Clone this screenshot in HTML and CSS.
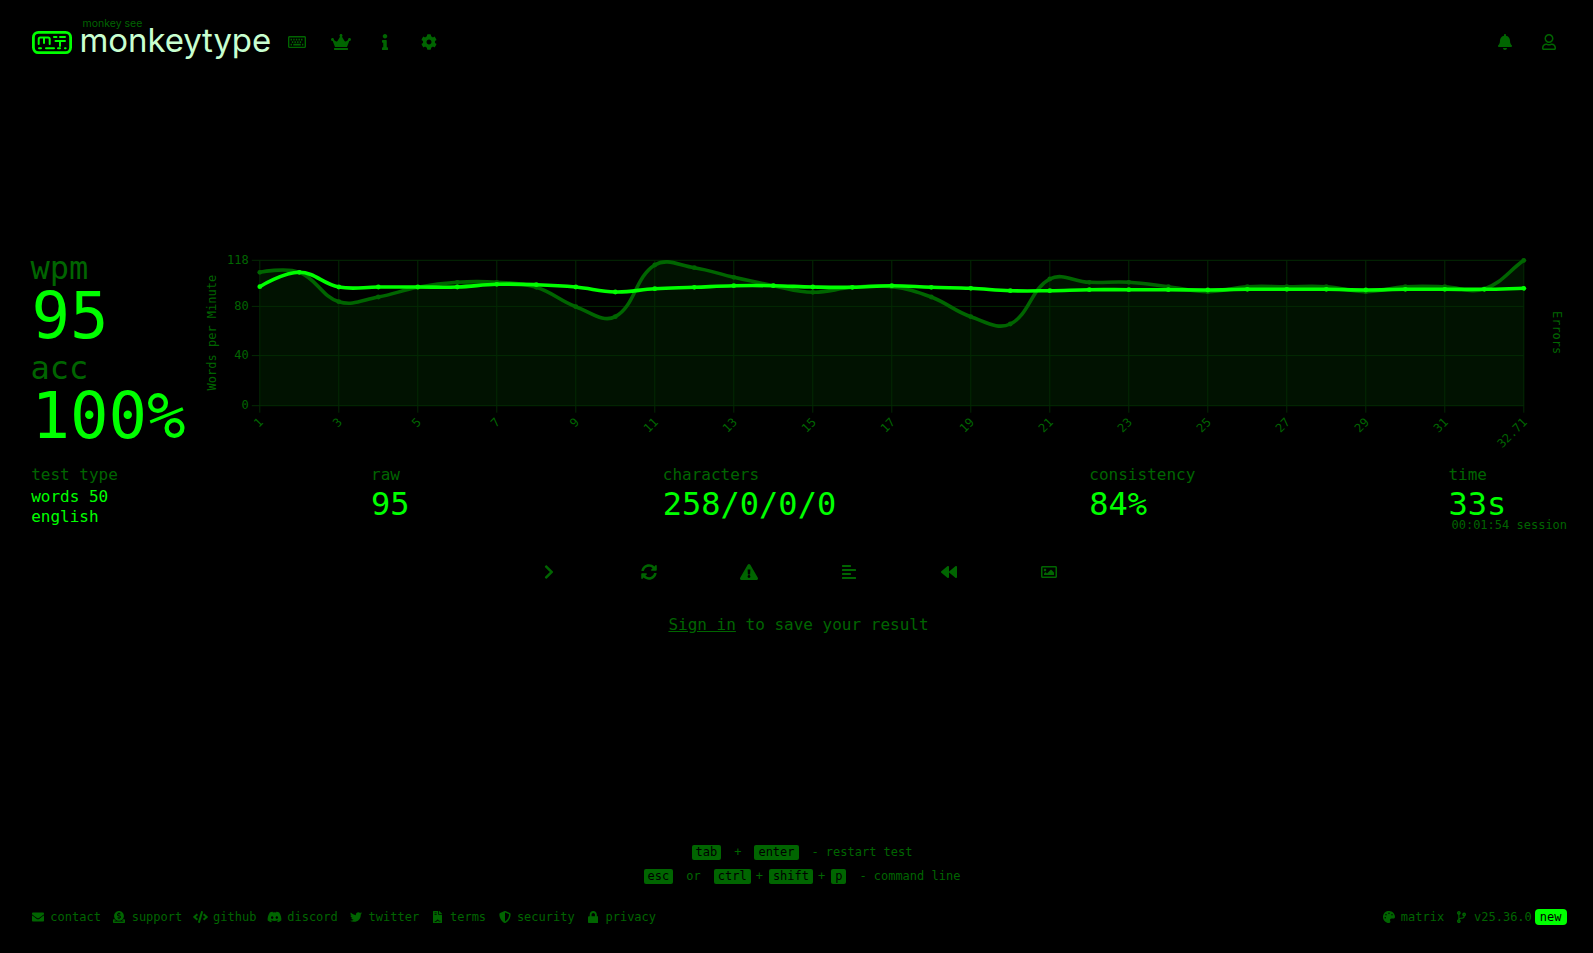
FILE: index.html
```html
<!DOCTYPE html>
<html lang="en">
<head>
  <meta charset="UTF-8">
  <meta name="viewport" content="width=device-width, initial-scale=1">
  <title>monkeytype</title>
  <link rel="stylesheet" href="styles.css">
</head>
<body>

<header class="top">
  <a class="logo">
    <svg class="logo-icon" viewBox="0 0 40 23" fill="none" stroke="currentColor" stroke-linecap="round" stroke-linejoin="round">
      <rect x="1.400" y="1.400" width="37.200" height="20.200" rx="5" stroke-width="2.800"/>
      <path stroke-width="2" d="M6.700 13V8.200a1.600 1.600 0 0 1 1.600-1.600h7.800a1.600 1.600 0 0 1 1.600 1.600V13M12 7v5M22 6h2.500M28 6h5M23.500 10H33M28 10v5M7 17.300h2M14 17.300h8M26 17.300h2M33 17.300h.6"/>
    </svg>
    <div class="logo-text">
      <div class="logo-top">monkey see</div>
      <div class="logo-name">monkeytype</div>
    </div>
  </a>
  <nav class="nav">
    <a class="nav-btn"><svg class="icon" viewBox="0 0 576 512"><path fill-rule="evenodd" d="M528 64H48C21.500 64 0 85.500 0 112v288c0 26.500 21.500 48 48 48h480c26.500 0 48-21.500 48-48V112c0-26.500-21.500-48-48-48zm4 340H44V108h488v296zM84 204h44v-52H84v52zm84 0h44v-52h-44v52zm84 0h44v-52h-44v52zm84 0h44v-52h-44v52zm80 0h48v-52h-48v52zM124 284h44v-52h-44v52zm84 0h44v-52h-44v52zm84 0h44v-52h-44v52zm84 0h44v-52h-44v52zM84 364h44v-52H84v52zm84 0h240v-52H168v52zm280 0h44v-52h-44v52z"/></svg></a>
    <a class="nav-btn"><svg class="icon" viewBox="0 0 640 512"><path d="M528 448H112c-8.800 0-16 7.200-16 16v32c0 8.800 7.200 16 16 16h416c8.800 0 16-7.200 16-16v-32c0-8.800-7.200-16-16-16zm64-320c-26.500 0-48 21.500-48 48 0 7.100 1.600 13.700 4.400 19.800L476 239.200c-15.400 9.200-35.300 4-44.200-11.600L350.300 85C361 76.200 368 63 368 48c0-26.500-21.500-48-48-48s-48 21.500-48 48c0 15 7 28.200 17.700 37l-81.500 142.600c-8.900 15.600-28.900 20.800-44.200 11.600l-72.300-43.400c2.700-6 4.400-12.700 4.400-19.800 0-26.500-21.500-48-48-48S0 149.500 0 176s21.500 48 48 48c2.600 0 5.200-.4 7.700-.8L128 416h384l72.300-192.800c2.500.4 5.100.8 7.700.8 26.500 0 48-21.500 48-48s-21.500-48-48-48z"/></svg></a>
    <a class="nav-btn"><svg class="icon" viewBox="0 0 192 512"><path d="M20 424.229h20V279.771H20c-11.046 0-20-8.954-20-20V212c0-11.046 8.954-20 20-20h112c11.046 0 20 8.954 20 20v212.229h20c11.046 0 20 8.954 20 20V492c0 11.046-8.954 20-20 20H20c-11.046 0-20-8.954-20-20v-47.771c0-11.046 8.954-20 20-20zM96 0C56.235 0 24 32.235 24 72s32.235 72 72 72 72-32.235 72-72S135.764 0 96 0z"/></svg></a>
    <a class="nav-btn"><svg class="icon" viewBox="0 0 512 512"><path d="M487.400 315.700l-42.600-24.600c4.300-23.200 4.300-47 0-70.200l42.600-24.600c4.900-2.800 7.100-8.600 5.500-14-11.100-35.600-30-67.800-54.700-94.600-3.800-4.100-10-5.100-14.800-2.300L380.800 110c-17.900-15.400-38.500-27.300-60.800-35.100V25.800c0-5.600-3.900-10.500-9.400-11.700-36.700-8.200-74.300-7.800-109.200 0-5.500 1.200-9.400 6.100-9.400 11.700V75c-22.200 7.900-42.800 19.800-60.800 35.100L88.700 85.500c-4.900-2.800-11-1.900-14.800 2.300-24.700 26.700-43.600 58.900-54.700 94.600-1.700 5.400.6 11.200 5.500 14L67.300 221c-4.300 23.200-4.300 47 0 70.200l-42.600 24.600c-4.900 2.800-7.100 8.600-5.500 14 11.100 35.600 30 67.800 54.700 94.600 3.800 4.100 10 5.100 14.800 2.300l42.600-24.600c17.900 15.400 38.500 27.300 60.800 35.100v49.200c0 5.600 3.900 10.500 9.400 11.700 36.700 8.200 74.300 7.800 109.200 0 5.500-1.200 9.400-6.100 9.400-11.700v-49.200c22.200-7.900 42.800-19.800 60.800-35.100l42.600 24.600c4.900 2.800 11 1.900 14.800-2.300 24.700-26.700 43.600-58.900 54.700-94.600 1.500-5.500-.7-11.300-5.600-14.100zM256 336c-44.100 0-80-35.900-80-80s35.900-80 80-80 80 35.900 80 80-35.900 80-80 80z"/></svg></a>
  </nav>
  <nav class="nav nav-right">
    <a class="nav-btn"><svg class="icon" viewBox="0 0 448 512"><path d="M224 512c35.320 0 63.970-28.650 63.970-64H160.030c0 35.350 28.650 64 63.970 64zm215.390-149.710c-19.320-20.760-55.470-51.990-55.470-154.290 0-77.700-54.480-139.900-127.940-155.160V32c0-17.670-14.320-32-31.980-32s-31.980 14.330-31.980 32v20.840C118.560 68.100 64.080 130.300 64.080 208c0 102.300-36.150 133.530-55.470 154.290-6 6.450-8.660 14.160-8.610 21.710.11 16.400 12.980 32 32.100 32h383.800c19.120 0 32-15.600 32.100-32 .05-7.550-2.610-15.270-8.610-21.710z"/></svg></a>
    <a class="nav-btn"><svg class="icon" viewBox="0 0 448 512"><path d="M313.600 304c-28.700 0-42.500 16-89.600 16-47.100 0-60.800-16-89.600-16C60.200 304 0 364.200 0 438.400V464c0 26.500 21.500 48 48 48h352c26.500 0 48-21.500 48-48v-25.600c0-74.200-60.200-134.400-134.400-134.400zM400 464H48v-25.600c0-47.600 38.800-86.400 86.400-86.400 14.600 0 38.300 16 89.600 16 51.700 0 74.900-16 89.600-16 47.600 0 86.400 38.800 86.400 86.400V464zM224 288c79.500 0 144-64.500 144-144S303.500 0 224 0 80 64.500 80 144s64.500 144 144 144zm0-240c52.900 0 96 43.100 96 96s-43.100 96-96 96-96-43.100-96-96 43.100-96 96-96z"/></svg></a>
  </nav>
</header>

<main class="result">
  <div class="result-top">
    <div class="big-stats">
      <div class="big-stat">
        <div class="big-label">wpm</div>
        <div class="big-value">95</div>
      </div>
      <div class="big-stat">
        <div class="big-label">acc</div>
        <div class="big-value">100%</div>
      </div>
    </div>
    <svg id="chart" class="chart" viewBox="200.500 252 1366 196"></svg>
  </div>

  <div class="more-stats">
    <div class="stat">
      <div class="stat-label">test type</div>
      <div class="stat-small">words 50<br>english</div>
    </div>
    <div class="stat">
      <div class="stat-label">raw</div>
      <div class="stat-value">95</div>
    </div>
    <div class="stat">
      <div class="stat-label">characters</div>
      <div class="stat-value">258/0/0/0</div>
    </div>
    <div class="stat">
      <div class="stat-label">consistency</div>
      <div class="stat-value">84%</div>
    </div>
    <div class="stat stat-time">
      <div class="stat-label">time</div>
      <div class="stat-value">33s</div>
      <div class="stat-session">00:01:54 session</div>
    </div>
  </div>

  <div class="actions">
    <a class="action"><svg class="icon" viewBox="0 0 320 512"><path d="M285.476 272.971L91.132 467.314c-9.373 9.373-24.569 9.373-33.941 0l-22.667-22.667c-9.357-9.357-9.375-24.522-.04-33.901L188.505 256 34.484 101.255c-9.335-9.379-9.317-24.544.04-33.901l22.667-22.667c9.373-9.373 24.569-9.373 33.941 0L285.475 239.030c9.373 9.372 9.373 24.568.001 33.941z"/></svg></a>
    <a class="action"><svg class="icon" viewBox="0 0 512 512"><path d="M370.720 133.280C339.458 104.008 298.888 87.962 255.848 88c-77.458.068-144.328 53.178-162.791 126.850-1.344 5.363-6.122 9.150-11.651 9.150H24.103c-7.498 0-13.194-6.807-11.807-14.176C33.933 94.924 134.813 8 256 8c66.448 0 126.791 26.136 171.315 68.685L463.030 40.970C478.149 25.851 504 36.559 504 57.941V192c0 13.255-10.745 24-24 24H345.941c-21.382 0-32.090-25.851-16.971-40.971l41.750-41.749zM32 296h134.059c21.382 0 32.090 25.851 16.971 40.971l-41.750 41.750c31.262 29.273 71.835 45.319 114.876 45.280 77.418-.07 144.315-53.144 162.787-126.849 1.344-5.363 6.122-9.150 11.651-9.150h57.304c7.498 0 13.194 6.807 11.807 14.176C478.067 417.076 377.187 504 256 504c-66.448 0-126.791-26.136-171.315-68.685L48.970 471.030C33.851 486.149 8 475.441 8 454.059V320c0-13.255 10.745-24 24-24z"/></svg></a>
    <a class="action"><svg class="icon" viewBox="0 0 576 512"><path d="M569.517 440.013C587.975 472.007 564.806 512 527.940 512H48.054c-36.937 0-59.999-40.055-41.577-71.987L246.423 23.985c18.467-32.009 64.720-31.951 83.154 0l239.940 416.028zM288 354c-25.405 0-46 20.595-46 46s20.595 46 46 46 46-20.595 46-46-20.595-46-46-46zm-43.673-165.346l7.418 136c.347 6.364 5.609 11.346 11.982 11.346h48.546c6.373 0 11.635-4.982 11.982-11.346l7.418-136c.375-6.874-5.098-12.654-11.982-12.654h-63.383c-6.884 0-12.356 5.780-11.981 12.654z"/></svg></a>
    <a class="action"><svg class="icon" viewBox="0 0 448 512"><path d="M12.830 352h262.340A12.820 12.820 0 0 0 288 339.170v-38.340A12.820 12.820 0 0 0 275.170 288H12.830A12.820 12.820 0 0 0 0 300.830v38.340A12.820 12.820 0 0 0 12.830 352zm0-256h262.340A12.820 12.820 0 0 0 288 83.170V44.830A12.820 12.820 0 0 0 275.170 32H12.830A12.820 12.820 0 0 0 0 44.830v38.340A12.820 12.820 0 0 0 12.830 96zM432 160H16a16 16 0 0 0-16 16v32a16 16 0 0 0 16 16h416a16 16 0 0 0 16-16v-32a16 16 0 0 0-16-16zm0 256H16a16 16 0 0 0-16 16v32a16 16 0 0 0 16 16h416a16 16 0 0 0 16-16v-32a16 16 0 0 0-16-16z"/></svg></a>
    <a class="action"><svg class="icon" viewBox="0 0 512 512"><path d="M11.500 280.600l192 160c20.600 17.200 52.500 2.800 52.500-24.600V96c0-27.400-31.900-41.800-52.500-24.600l-192 160c-15.300 12.800-15.300 36.400 0 49.200zm256 0l192 160c20.600 17.200 52.500 2.800 52.500-24.600V96c0-27.400-31.900-41.800-52.500-24.600l-192 160c-15.300 12.800-15.300 36.400 0 49.200z"/></svg></a>
    <a class="action"><svg class="icon" viewBox="0 0 512 512"><path d="M464 64H48C21.490 64 0 85.490 0 112v288c0 26.510 21.490 48 48 48h416c26.510 0 48-21.490 48-48V112c0-26.510-21.490-48-48-48zm-6 336H54a6 6 0 0 1-6-6V118a6 6 0 0 1 6-6h404a6 6 0 0 1 6 6v276a6 6 0 0 1-6 6zM128 152c-22.091 0-40 17.909-40 40s17.909 40 40 40 40-17.909 40-40-17.909-40-40-40zM96 352h320v-80l-87.515-87.515c-4.686-4.686-12.284-4.686-16.971 0L192 304l-39.515-39.515c-4.686-4.686-12.284-4.686-16.971 0L96 304v48z"/></svg></a>
  </div>

  <div class="sign-in"><a href="#">Sign in</a> to save your result</div>
</main>

<div class="hints">
  <div><kbd>tab</kbd><span class="sep">+</span><kbd>enter</kbd><span class="sep sep-end">-</span>restart test</div>
  <div><kbd>esc</kbd><span class="sep">or</span><kbd>ctrl</kbd><span class="plus">+</span><kbd>shift</kbd><span class="plus">+</span><kbd>p</kbd><span class="sep sep-end">-</span>command line</div>
</div>

<footer class="bottom">
  <div class="links">
    <a class="link"><span class="fw"><svg class="icon" viewBox="0 0 512 512"><path d="M502.300 190.800c3.900-3.100 9.700-.2 9.700 4.700V400c0 26.500-21.500 48-48 48H48c-26.500 0-48-21.500-48-48V195.600c0-5 5.700-7.800 9.700-4.700 22.400 17.400 52.100 39.500 154.100 113.600 21.100 15.400 56.700 47.800 92.200 47.600 35.700.3 72-32.800 92.300-47.600 102-74.100 131.600-96.300 154-113.700zM256 320c23.200.4 56.600-29.200 73.400-41.400 132.700-96.300 142.800-104.700 173.400-128.700 5.800-4.500 9.200-11.500 9.200-18.900v-19c0-26.500-21.500-48-48-48H48C21.500 64 0 85.500 0 112v19c0 7.400 3.400 14.300 9.200 18.900 30.600 23.900 40.700 32.400 173.400 128.700 16.800 12.200 50.200 41.800 73.400 41.400z"/></svg></span>contact</a>
    <a class="link"><span class="fw"><svg class="icon" viewBox="0 0 512 512"><path d="M256 416c114.900 0 208-93.100 208-208S370.900 0 256 0 48 93.100 48 208s93.100 208 208 208zM233.800 97.400V80.600c0-9.200 7.400-16.600 16.600-16.600h11.100c9.200 0 16.600 7.400 16.600 16.600v17c15.500.8 30.500 6.100 43 15.400 5.600 4.100 6.200 12.300 1.200 17.100L306 145.600c-3.800 3.700-9.500 3.800-14 1-5.400-3.400-11.400-5.100-17.800-5.100h-38.900c-9 0-16.300 8.200-16.300 18.300 0 8.200 5 15.500 12.100 17.600l62.300 18.700c25.700 7.700 43.700 32.400 43.700 60.100 0 34-26.400 61.500-59.100 62.400v16.800c0 9.200-7.400 16.600-16.600 16.600h-11.100c-9.200 0-16.600-7.400-16.600-16.600v-17c-15.500-.8-30.500-6.100-43-15.400-5.600-4.100-6.200-12.300-1.200-17.100l16.300-15.500c3.800-3.700 9.500-3.800 14-1 5.400 3.400 11.400 5.100 17.800 5.100h38.900c9 0 16.300-8.200 16.300-18.300 0-8.200-5-15.500-12.100-17.600l-62.300-18.700c-25.700-7.700-43.700-32.400-43.700-60.100.1-34 26.400-61.500 59.100-62.400zM480 352h-32.500c-19.600 26-44.600 47.700-73 64h63.800c5.300 0 9.600 3.600 9.600 8v16c0 4.400-4.300 8-9.600 8H73.600c-5.300 0-9.600-3.600-9.600-8v-16c0-4.400 4.300-8 9.600-8h63.800c-28.400-16.300-53.300-38-73-64H32c-17.700 0-32 14.300-32 32v96c0 17.700 14.300 32 32 32h448c17.700 0 32-14.300 32-32v-96c0-17.700-14.300-32-32-32z"/></svg></span>support</a>
    <a class="link"><span class="fw"><svg class="icon" viewBox="0 0 640 512"><path d="M278.900 511.500l-61-17.700c-6.400-1.800-10-8.500-8.200-14.900L346.200 8.700c1.800-6.400 8.500-10 14.900-8.200l61 17.700c6.400 1.800 10 8.500 8.200 14.900L293.800 503.300c-1.900 6.400-8.500 10.100-14.900 8.200zm-114-112.200l43.500-46.400c4.600-4.900 4.300-12.700-.8-17.200L117 256l90.600-79.700c5.100-4.500 5.500-12.300.8-17.200l-43.500-46.400c-4.500-4.800-12.100-5.100-17-.5L3.800 247.200c-5.100 4.700-5.100 12.800 0 17.500l144.100 135.100c4.900 4.600 12.500 4.400 17-.5zm327.200.6l144.100-135.100c5.100-4.700 5.100-12.800 0-17.500L492.100 112.100c-4.800-4.500-12.400-4.300-17 .5L431.600 159c-4.600 4.900-4.300 12.700.8 17.200L523 256l-90.600 79.700c-5.100 4.500-5.500 12.300-.8 17.200l43.500 46.400c4.500 4.900 12.100 5.100 17 .6z"/></svg></span>github</a>
    <a class="link"><span class="fw"><svg class="icon" viewBox="0 0 640 512"><path d="M524.531 69.836a1.500 1.500 0 0 0-.764-.7A485.065 485.065 0 0 0 404.081 32.030a1.816 1.816 0 0 0-1.923.91 337.461 337.461 0 0 0-14.900 30.600 447.848 447.848 0 0 0-134.426 0 309.541 309.541 0 0 0-15.135-30.600 1.890 1.890 0 0 0-1.924-.91A483.689 483.689 0 0 0 116.085 69.137a1.712 1.712 0 0 0-.788.676C39.068 183.651 18.186 294.690 28.430 404.354a2.016 2.016 0 0 0 .765 1.375A487.666 487.666 0 0 0 176.020 479.918a1.900 1.900 0 0 0 2.063-.676A348.200 348.200 0 0 0 208.120 430.400a1.860 1.860 0 0 0-1.019-2.588 321.173 321.173 0 0 1-45.868-21.853 1.885 1.885 0 0 1-.185-3.126c3.082-2.309 6.166-4.711 9.109-7.137a1.819 1.819 0 0 1 1.900-.256c96.229 43.917 200.410 43.917 295.500 0a1.812 1.812 0 0 1 1.924.233c2.944 2.426 6.027 4.851 9.132 7.160a1.884 1.884 0 0 1-.162 3.126 301.407 301.407 0 0 1-45.890 21.830 1.875 1.875 0 0 0-1 2.611 391.055 391.055 0 0 0 30.014 48.815 1.864 1.864 0 0 0 2.063.7A486.048 486.048 0 0 0 610.700 405.729a1.882 1.882 0 0 0 .765-1.352C623.729 277.594 590.933 167.465 524.531 69.836zM222.491 337.580c-28.972 0-52.844-26.587-52.844-59.239S193.056 219.100 222.491 219.100c29.665 0 53.306 26.820 52.843 59.239C275.334 310.993 251.924 337.580 222.491 337.580zm195.380 0c-28.971 0-52.843-26.587-52.843-59.239S388.437 219.100 417.871 219.100c29.667 0 53.307 26.820 52.844 59.239C470.715 310.993 447.538 337.580 417.871 337.580z"/></svg></span>discord</a>
    <a class="link"><span class="fw"><svg class="icon" viewBox="0 0 512 512"><path d="M459.370 151.716c.325 4.548.325 9.097.325 13.645 0 138.720-105.583 298.558-298.558 298.558-59.452 0-114.680-17.219-161.137-47.106 8.447.974 16.568 1.299 25.340 1.299 49.055 0 94.213-16.568 130.274-44.832-46.132-.975-84.792-31.188-98.112-72.772 6.498.974 12.995 1.624 19.818 1.624 9.421 0 18.843-1.300 27.614-3.573-48.081-9.747-84.143-51.980-84.143-102.985v-1.299c13.969 7.797 30.214 12.670 47.431 13.319-28.264-18.843-46.781-51.005-46.781-87.391 0-19.492 5.197-37.360 14.294-52.954 51.655 63.675 129.300 105.258 216.365 109.807-1.624-7.797-2.599-15.918-2.599-24.040 0-57.828 46.782-104.934 104.934-104.934 30.213 0 57.502 12.670 76.670 33.137 23.715-4.548 46.456-13.320 66.599-25.340-7.798 24.366-24.366 44.833-46.132 57.827 21.117-2.273 41.584-8.122 60.426-16.243-14.292 20.791-32.161 39.308-52.628 54.253z"/></svg></span>twitter</a>
    <a class="link"><span class="fw"><svg class="icon" viewBox="0 0 384 512"><path fill-rule="evenodd" d="M224 136V0H24C10.700 0 0 10.700 0 24v464c0 13.300 10.700 24 24 24h336c13.300 0 24-10.700 24-24V160H248c-13.200 0-24-10.800-24-24zM64 72c0-4.420 3.580-8 8-8h80c4.420 0 8 3.580 8 8v16c0 4.420-3.580 8-8 8H72c-4.420 0-8-3.580-8-8V72zm0 64c0-4.420 3.580-8 8-8h80c4.420 0 8 3.580 8 8v16c0 4.420-3.580 8-8 8H72c-4.420 0-8-3.580-8-8v-16zm192 280h64v32h-64c-30 0-40-30-60-30l-36 30-30 12H72v-32h48l60-60c20-10 40 0 50 20 8 16 16 28 26 28zM377 105L279.100 7c-4.500-4.500-10.600-7-17-7H256v128h128v-6.100c0-6.300-2.500-12.400-7-16.900z"/></svg></span>terms</a>
    <a class="link"><span class="fw"><svg class="icon" viewBox="0 0 512 512"><path d="M466.500 83.700l-192-80a48.150 48.150 0 0 0-36.900 0l-192 80C27.700 91.100 16 108.600 16 128c0 198.500 114.500 335.700 221.500 380.300 11.800 4.900 25.100 4.900 36.900 0C360.100 472.600 496 349.300 496 128c0-19.400-11.700-36.900-29.500-44.300zM256.100 446.300l-.1-381 175.900 73.300c-3.300 151.400-82.100 261.100-175.800 307.700z"/></svg></span>security</a>
    <a class="link"><span class="fw"><svg class="icon" viewBox="0 0 448 512"><path d="M400 224h-24v-72C376 68.200 307.800 0 224 0S72 68.200 72 152v72H48c-26.500 0-48 21.500-48 48v192c0 26.500 21.500 48 48 48h352c26.500 0 48-21.500 48-48V272c0-26.500-21.500-48-48-48zm-104 0H152v-72c0-39.700 32.300-72 72-72s72 32.300 72 72v72z"/></svg></span>privacy</a>
  </div>
  <div class="links links-right">
    <a class="link"><span class="fw"><svg class="icon" viewBox="0 0 512 512"><path d="M204.300 5C104.900 24.400 24.800 104.300 5.200 203.400c-37 187 131.700 326.400 258.800 306.700 41.200-6.400 61.400-54.600 42.500-91.700-23.100-45.400 9.900-98.400 60.900-98.400h79.700c35.800 0 64.800-29.600 64.900-65.300C511.500 97.100 368.100-26.900 204.300 5zM96 320c-17.700 0-32-14.300-32-32s14.300-32 32-32 32 14.300 32 32-14.300 32-32 32zm32-128c-17.700 0-32-14.300-32-32s14.300-32 32-32 32 14.300 32 32-14.300 32-32 32zm128-64c-17.700 0-32-14.300-32-32s14.300-32 32-32 32 14.300 32 32-14.300 32-32 32zm128 64c-17.700 0-32-14.300-32-32s14.300-32 32-32 32 14.300 32 32-14.300 32-32 32z"/></svg></span>matrix</a>
    <a class="link"><span class="fw"><svg class="icon" viewBox="0 0 384 512"><path d="M384 144c0-44.200-35.800-80-80-80s-80 35.800-80 80c0 36.400 24.300 67.100 57.500 76.800-.6 16.100-4.200 28.500-11 36.900-15.400 19.200-49.300 22.400-85.200 25.700-28.200 2.600-57.400 5.400-81.300 16.900v-144c32.500-10.200 56-40.500 56-76.300 0-44.200-35.800-80-80-80S0 35.800 0 80c0 35.800 23.500 66.100 56 76.300v199.300C23.500 365.900 0 396.200 0 432c0 44.200 35.800 80 80 80s80-35.800 80-80c0-34-21.200-63.100-51.200-74.600 3.100-5.200 7.800-9.800 14.900-13.400 16.200-8.200 40.400-10.400 66.100-12.800 42.200-3.900 90-8.400 118.200-43.400 14-17.400 21.100-39.800 21.600-67.900 31.600-10.800 54.400-40.700 54.400-75.900zM80 64c8.800 0 16 7.200 16 16s-7.200 16-16 16-16-7.200-16-16 7.200-16 16-16zm0 384c-8.800 0-16-7.200-16-16s7.200-16 16-16 16 7.200 16 16-7.200 16-16 16zm224-320c8.800 0 16 7.200 16 16s-7.200 16-16 16-16-7.200-16-16 7.200-16 16-16z"/></svg></span>v25.36.0<span class="badge">new</span></a>
  </div>
</footer>

<script src="chart.js"></script>
</body>
</html>
```

FILE: styles.css
```css
* {
  box-sizing: border-box;
}
html, body {
  margin: 0;
  height: 100%;
}
body {
  display: flex;
  flex-direction: column;
  height: 953px;
  padding: 0 26.5px 0 30.5px;
  background: #000;
  color: #006500;
  font-family: "DejaVu Sans Mono", "Liberation Mono", monospace;
  overflow: hidden;
}
a {
  color: inherit;
}
.icon {
  display: block;
  height: 1em;
  fill: currentColor;
}

/* Header */
.top {
  display: flex;
  align-items: center;
  height: 83px;
  flex: none;
}
.logo {
  display: flex;
  align-items: center;
  margin-right: 8px;
}
.logo-icon {
  width: 40px;
  height: 23px;
  color: #00ff00;
  margin: 1px 8px 0 1px;
}
.logo-text {
  margin-top: -6px;
  font-family: Inter, "Noto Sans", sans-serif;
}
.logo-top {
  font-size: 10.5px;
  line-height: 10px;
  margin-left: 3px;
  margin-bottom: -7px;
}
.logo-name {
  font-size: 33px;
  line-height: 36px;
  color: #c8ffd0;
  letter-spacing: -0.1px;
}
.nav {
  display: flex;
  gap: 8px;
}
.nav-right {
  margin-left: auto;
}
.nav-btn {
  display: flex;
  align-items: center;
  justify-content: center;
  width: 36px;
  height: 32px;
  font-size: 16px;
}

/* Result */
.result {
  padding-top: 169px;
}
.result-top {
  display: grid;
  grid-template-columns: 154px 1fr;
  gap: 16px;
  height: 196px;
}
.big-stats {
  display: flex;
  flex-direction: column;
  gap: 4px;
}
.big-label {
  font-size: 32px;
  line-height: 32px;
}
.big-value {
  font-size: 64px;
  line-height: 64px;
  margin-left: 1px;
  color: #00ff00;
}
.chart {
  display: block;
  width: 1366px;
  height: 196px;
  font-size: 12px;
  overflow: visible;
}
.chart text {
  fill: #006500;
  font-family: "DejaVu Sans Mono", "Liberation Mono", monospace;
}
.grid-line {
  stroke: #032a03;
  stroke-width: 1;
}
.area {
  fill: #011201;
}
.line {
  fill: none;
  stroke-width: 3.6;
}
.line-raw {
  stroke: #006500;
}
.line-wpm {
  stroke: #00ff00;
}
.more-stats {
  display: flex;
  justify-content: space-between;
  margin-top: 19px;
  padding-left: 0.7px;
}
.stat-label {
  font-size: 16px;
  line-height: 16px;
}
.stat-value {
  font-size: 32px;
  line-height: 32px;
  margin-top: 5px;
  color: #00ff00;
}
.stat-small {
  font-size: 16px;
  line-height: 20px;
  margin-top: 4px;
  color: #00ff00;
}
.stat-time {
  width: 118px;
}
.stat-session {
  font-size: 12px;
  line-height: 12px;
  margin: -1px 0 0 3px;
  white-space: nowrap;
}
.actions {
  display: flex;
  justify-content: center;
  margin-top: 25px;
}
.action {
  display: flex;
  align-items: center;
  justify-content: center;
  width: 100px;
  height: 32px;
  font-size: 16px;
}
.sign-in {
  margin-top: 29px;
  font-size: 16px;
  line-height: 16px;
  text-align: center;
}

/* Key hints */
.hints {
  margin-top: auto;
  margin-bottom: 21px;
  padding-left: 7px;
  font-size: 12px;
  line-height: 23.5px;
  text-align: center;
}
kbd {
  display: inline-block;
  height: 15px;
  padding: 0 4px;
  border-radius: 2px;
  background: #006500;
  color: #000;
  font: inherit;
  line-height: 15px;
}
.sep {
  margin: 0 13px;
}
.sep-end {
  margin-right: 7px;
}
.plus {
  margin: 0 6px 0 5px;
}

/* Footer */
.bottom {
  display: flex;
  justify-content: space-between;
  flex: none;
  height: 16px;
  margin-bottom: 28px;
  font-size: 12px;
  line-height: 16px;
}
.links {
  display: flex;
  gap: 11px;
}
.links-right {
  gap: 10px;
}
.link {
  display: flex;
  align-items: center;
}
.fw {
  display: flex;
  justify-content: center;
  width: 15px;
  margin-right: 4.8px;
}
.badge {
  margin-left: 3px;
  padding: 0 5px;
  border-radius: 4px;
  background: #00ff00;
  color: #000;
}
```

FILE: chart.js
```js
// px positions of the plot, same numbers as the svg viewBox
const plotLeft = 259.3;
const plotTop = 260.3;
const plotBottom = 405.7;
const step = 39.5;

const wpm = [286.7, 272.3, 287, 287, 287, 287, 284.3, 284.7, 287, 292, 288.7, 287.3, 285.7, 285.7, 287, 287.3, 285.7, 287.3, 288.3, 290.7, 290.7, 289.7, 289.7, 289.7, 290, 289.3, 289.3, 289.3, 290, 289.3, 289.3, 289.3, 288.3];
const raw = [272.3, 272.3, 301.7, 297, 287.3, 282.3, 282.3, 287.3, 306.7, 316.7, 265, 267.7, 277.3, 285.7, 292.3, 287.3, 286.7, 297, 316.7, 324, 279, 282.3, 282.3, 286.7, 291.7, 286.7, 286.7, 286.7, 291.7, 286.7, 286.7, 289, 260.3];

const svg = document.getElementById('chart');
const ns = 'http://www.w3.org/2000/svg';

function add(tag, attrs, text) {
  const el = document.createElementNS(ns, tag);
  Object.keys(attrs).forEach((k) => el.setAttribute(k, attrs[k]));
  if (text) el.textContent = text;
  svg.appendChild(el);
  return el;
}

function xAt(i) {
  return plotLeft + i * step;
}

// bezier spline, tension 0.4
function spline(ys) {
  const pts = ys.map((y, i) => ({ x: xAt(i), y }));
  const t = 0.4;
  let d = `M${pts[0].x} ${pts[0].y}`;
  let prevOut = pts[0];
  for (let i = 1; i < pts.length; i++) {
    const p = pts[i];
    const before = pts[i - 1];
    const after = pts[i + 1] || p;
    const d1 = Math.hypot(p.x - before.x, p.y - before.y);
    const d2 = Math.hypot(after.x - p.x, after.y - p.y);
    const fa = d1 + d2 ? t * d1 / (d1 + d2) : 0;
    const fb = d1 + d2 ? t * d2 / (d1 + d2) : 0;
    const inX = p.x - fa * (after.x - before.x);
    const inY = p.y - fa * (after.y - before.y);
    d += `C${prevOut.x} ${prevOut.y} ${inX} ${inY} ${p.x} ${p.y}`;
    prevOut = { x: p.x + fb * (after.x - before.x), y: p.y + fb * (after.y - before.y) };
  }
  return d;
}

// area goes under the grid lines
const rawPath = spline(raw);
add('path', { class: 'area', d: `${rawPath}L${xAt(32)} ${plotBottom}L${plotLeft} ${plotBottom}Z` });

const yTicks = [[118, 260.3], [80, 306.4], [40, 355.6], [0, 405.7]];
yTicks.forEach(([label, y]) => {
  add('line', { class: 'grid-line', x1: plotLeft - 8, x2: xAt(32), y1: y, y2: y });
  add('text', { x: plotLeft - 11, y: y + 3.5, 'text-anchor': 'end' }, String(label));
});

for (let i = 0; i <= 32; i += 2) {
  const x = xAt(i);
  add('line', { class: 'grid-line', x1: x, x2: x, y1: plotTop, y2: plotBottom + 7 });
  const label = i === 32 ? '32.71' : String(i + 1);
  add('text', { 'text-anchor': 'end', transform: `translate(${x + 4} 423) rotate(-45)` }, label);
}

add('text', { 'text-anchor': 'middle', transform: 'translate(215.500 332.600) rotate(-90)' }, 'Words per Minute');
add('text', { 'text-anchor': 'middle', transform: 'translate(1552 332.600) rotate(90)' }, 'Errors');

add('path', { class: 'line line-raw', d: rawPath });
raw.forEach((y, i) => add('circle', { cx: xAt(i), cy: y, r: 2.4, fill: '#006500' }));
add('path', { class: 'line line-wpm', d: spline(wpm) });
wpm.forEach((y, i) => add('circle', { cx: xAt(i), cy: y, r: 2.4, fill: '#00ff00' }));
```
